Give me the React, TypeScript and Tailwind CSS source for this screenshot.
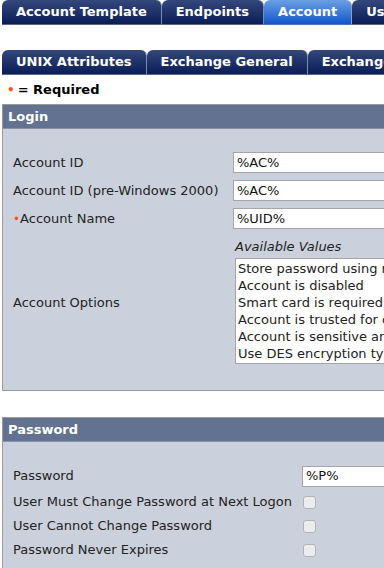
import React from 'react';

const font = { fontFamily: '"DejaVu Sans", Verdana, sans-serif' };

function Tab({ label, active = false }: { label: string; active?: boolean }) {
  return (
    <div
      className={`h-[25px] shrink-0 rounded-t-[6px] border-r border-b px-[14px] flex items-center text-[13px] font-bold text-white whitespace-nowrap ${
        active
          ? 'bg-gradient-to-b from-[#6a9fe3] to-[#0f55cb] border-r-[#8aa0c8] border-b-[#4d73b8]'
          : 'bg-gradient-to-b from-[#34487c] to-[#0b1d56] border-r-[#7e8cab] border-b-[#5a6889]'
      }`}
    >
      {label}
    </div>
  );
}

function Panel({ title, children }: { title: string; children: React.ReactNode }) {
  return (
    <div className="ml-[2px] w-[640px] border border-[#9a9a9a] bg-[#cbd1dc]">
      <div className="h-[24px] bg-[#627290] border-b border-[#8793a8] px-[5px] flex items-center text-[13px] font-bold text-white">
        {title}
      </div>
      {children}
    </div>
  );
}

function TextInput({ value }: { value: string }) {
  return (
    <div className="h-[21px] w-[300px] border border-[#a5a5a5] bg-white px-[3px] flex items-center text-[13px] text-[#111]">
      {value}
    </div>
  );
}

function Checkbox() {
  return <div className="w-[13px] h-[13px] rounded-[3px] border border-[#b4b4b4] bg-[#ececec]" />;
}

const options = [
  'Store password using reversible encryption',
  'Account is disabled',
  'Smart card is required for interactive logon',
  'Account is trusted for delegation',
  'Account is sensitive and cannot be delegated',
  'Use DES encryption types for this account',
];

export default function App() {
  return (
    <div className="w-screen h-screen overflow-hidden bg-white text-[#222]" style={font}>
      {/* top tabs */}
      <div className="flex pl-[2px]">
        <Tab label="Account Template" />
        <Tab label="Endpoints" />
        <Tab label="Account" active />
        <Tab label="User Options" />
      </div>

      {/* sub tabs */}
      <div className="flex pl-[2px] mt-[25px]">
        <Tab label="UNIX Attributes" />
        <Tab label="Exchange General" />
        <Tab label="Exchange Advanced" />
      </div>

      <div className="h-[29px] flex items-center pl-[7px] text-[13px] font-bold text-black">
        <span className="text-[#f05a14] mr-[3px] text-[12px]">•</span>= Required
      </div>

      <Panel title="Login">
        <div className="pt-[23px] pb-[26px] pl-[10px] flex flex-col gap-[7px] text-[13px]">
          <div className="flex items-center">
            <div className="w-[220px]">Account ID</div>
            <TextInput value="%AC%" />
          </div>
          <div className="flex items-center">
            <div className="w-[220px]">Account ID (pre-Windows 2000)</div>
            <TextInput value="%AC%" />
          </div>
          <div className="flex items-center">
            <div className="w-[220px]">
              <span className="text-[#f05a14] text-[12px]">•</span>Account Name
            </div>
            <TextInput value="%UID%" />
          </div>
          <div className="flex items-center">
            <div className="w-[222px] pt-[6px]">Account Options</div>
            <div className="flex flex-col">
              <div className="italic h-[22px] flex items-center">Available Values</div>
              <div className="w-[300px] border border-[#a5a5a5] bg-white px-[2px] py-[1px] leading-[17px] whitespace-nowrap overflow-hidden">
                {options.map((o) => (
                  <div key={o}>{o}</div>
                ))}
              </div>
            </div>
          </div>
        </div>
      </Panel>

      <div className="h-[26px]" />

      <Panel title="Password">
        <div className="pt-[22px] pb-[20px] pl-[10px] flex flex-col text-[13px]">
          <div className="flex items-center h-[24px]">
            <div className="w-[289px]">Password</div>
            <TextInput value="%P%" />
          </div>
          <div className="flex items-center h-[24px] mt-[2px]">
            <div className="w-[290px] whitespace-nowrap">User Must Change Password at Next Logon</div>
            <Checkbox />
          </div>
          <div className="flex items-center h-[24px]">
            <div className="w-[290px]">User Cannot Change Password</div>
            <Checkbox />
          </div>
          <div className="flex items-center h-[24px]">
            <div className="w-[290px]">Password Never Expires</div>
            <Checkbox />
          </div>
        </div>
      </Panel>
    </div>
  );
}
